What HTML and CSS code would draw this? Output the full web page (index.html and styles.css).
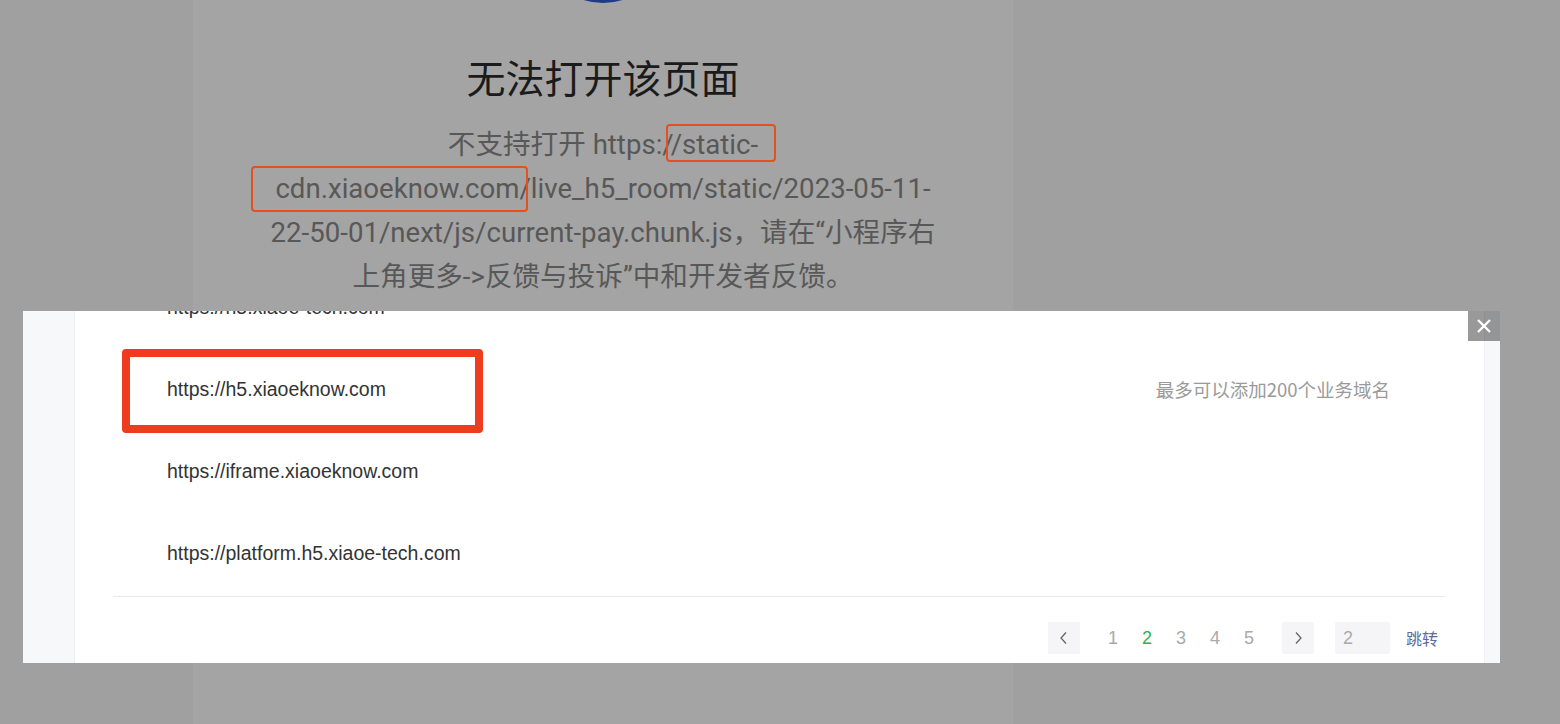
FILE: index.html
```html
<!DOCTYPE html>
<html lang="zh-CN">
  <head>
    <meta charset="UTF-8" />
    <meta name="viewport" content="width=device-width, initial-scale=1.0" />
    <title>无法打开该页面</title>
    <link rel="stylesheet" href="styles.css">
  </head>
  <body>
    <div class="stage">
      <div class="phone">
        <div class="logo"></div>
        <h1 class="title">无法打开该页面</h1>
        <p class="desc">
          不支持打开 https://static-<br />
          cdn.xiaoeknow.com/live_h5_room/static/2023-05-11-<br />
          22-50-01/next/js/current-pay.chunk.js，请在“小程序右<br />
          上角更多-&gt;反馈与投诉”中和开发者反馈。
        </p>
        <span class="mark mark-1"></span>
        <span class="mark mark-2"></span>
      </div>

      <div class="panel">
        <div class="side"></div>
        <div class="main">
          <ul class="domain-list">
            <li class="domain-row">https://h5.xiaoe-tech.com</li>
            <li class="domain-row">
              <span>https://h5.xiaoeknow.com</span>
              <span class="tip">最多可以添加200个业务域名</span>
            </li>
            <li class="domain-row">https://iframe.xiaoeknow.com</li>
            <li class="domain-row">https://platform.h5.xiaoe-tech.com</li>
          </ul>
          <div class="pager">
            <button type="button" class="pager-btn">
              <svg width="10" height="14" viewBox="0 0 10 14"><path d="M7 1.5 2 7l5 5.5" fill="none" stroke="#666" stroke-width="1.3" /></svg>
            </button>
            <div class="pages">
              <span class="page-num">1</span>
              <span class="page-num active">2</span>
              <span class="page-num">3</span>
              <span class="page-num">4</span>
              <span class="page-num">5</span>
            </div>
            <button type="button" class="pager-btn">
              <svg width="10" height="14" viewBox="0 0 10 14"><path d="M3 1.5 8 7l-5 5.5" fill="none" stroke="#666" stroke-width="1.3" /></svg>
            </button>
            <input type="text" class="pager-input" value="2" />
            <span class="pager-go">跳转</span>
          </div>
        </div>
        <div class="side side-right"></div>
        <span class="mark mark-big"></span>
        <button type="button" class="close">
          <svg width="16" height="16" viewBox="0 0 16 16"><path d="M2 2l12 12M14 2 2 14" stroke="#fff" stroke-width="2.4" /></svg>
        </button>
      </div>
    </div>
  </body>
</html>
```

FILE: styles.css
```css
* {
  box-sizing: border-box;
}
body {
  margin: 0;
  background-color: #a0a0a0;
  font-family: Roboto, "Noto Sans CJK SC", sans-serif;
  overflow: hidden;
}
.stage {
  position: relative;
  width: 1560px;
  height: 724px;
}
.phone {
  position: relative;
  width: 820px;
  height: 724px;
  margin-left: 193px;
  background-color: #a4a4a4;
  text-align: center;
  overflow: hidden;
}
.logo {
  width: 130px;
  height: 130px;
  margin: -127px auto 0;
  border-radius: 50%;
  background-color: #20398a;
}
.title {
  margin: 55px 0 0;
  font-size: 39px;
  line-height: 44px;
  font-weight: 400;
  color: #1b1b1b;
}
.desc {
  margin: 21px 0 0;
  font-size: 27.6px;
  line-height: 44px;
  color: #585858;
}
.mark {
  position: absolute;
  border: 2px solid #e4501f;
  border-radius: 4px;
}
.mark-1 {
  left: 473px;
  top: 124px;
  width: 110px;
  height: 38px;
}
.mark-2 {
  left: 58px;
  top: 166px;
  width: 277px;
  height: 46px;
}

/* 业务域名 弹层 */
.panel {
  position: absolute;
  left: 23px;
  top: 311px;
  width: 1477px;
  height: 352px;
  display: flex;
  background-color: #fff;
  overflow: hidden;
  font-family: "Liberation Sans", "Noto Sans CJK SC", sans-serif;
}
.side {
  width: 52px;
  background-color: #f7f8fa;
  border-right: 1px solid #eef0f3;
}
.side-right {
  width: 16px;
  border-right: none;
  border-left: 1px solid #eef0f3;
}
.main {
  flex: 1;
  padding: 0 39px 0 38px;
}
.domain-list {
  list-style: none;
  margin: -45px 0 0;
  padding: 0;
}
.domain-row {
  height: 82px;
  padding: 0 55px 0 54px;
  display: flex;
  align-items: center;
  justify-content: space-between;
  font-size: 19.5px;
  color: #333;
}
.tip {
  color: #9a9a9a;
  font-family: "Noto Sans CJK SC", sans-serif;
  font-size: 18.5px;
}
.pager {
  margin-top: 2px;
  border-top: 1px solid #e8e8e8;
  padding: 25px 7px 0 0;
  display: flex;
  justify-content: flex-end;
  align-items: center;
}
.pager-btn {
  width: 32px;
  height: 32px;
  padding: 0;
  border: none;
  border-radius: 2px;
  background-color: #f5f5f7;
  display: flex;
  align-items: center;
  justify-content: center;
}
.pages {
  display: flex;
  margin: 0 16px 0 16px;
}
.page-num {
  width: 34px;
  text-align: center;
  font-size: 18px;
  color: #aaa;
}
.page-num.active {
  color: #2bb24c;
}
.pager-input {
  width: 55px;
  height: 32px;
  margin-left: 21px;
  padding: 0 0 0 8px;
  border: none;
  border-radius: 2px;
  background-color: #f5f5f7;
  font-family: "Liberation Sans", sans-serif;
  font-size: 18px;
  color: #aaa;
}
.pager-go {
  margin-left: 16px;
  font-family: "Noto Sans CJK SC", sans-serif;
  font-size: 16px;
  color: #5c6a9c;
}
.mark-big {
  left: 99px;
  top: 38px;
  width: 361px;
  height: 84px;
  border: 8px solid #f03c1e;
  border-radius: 4px;
}
.close {
  position: absolute;
  right: 0;
  top: 0;
  width: 32px;
  height: 30px;
  padding: 0;
  border: none;
  background-color: rgba(0, 0, 0, 0.4);
  display: flex;
  align-items: center;
  justify-content: center;
}
```
